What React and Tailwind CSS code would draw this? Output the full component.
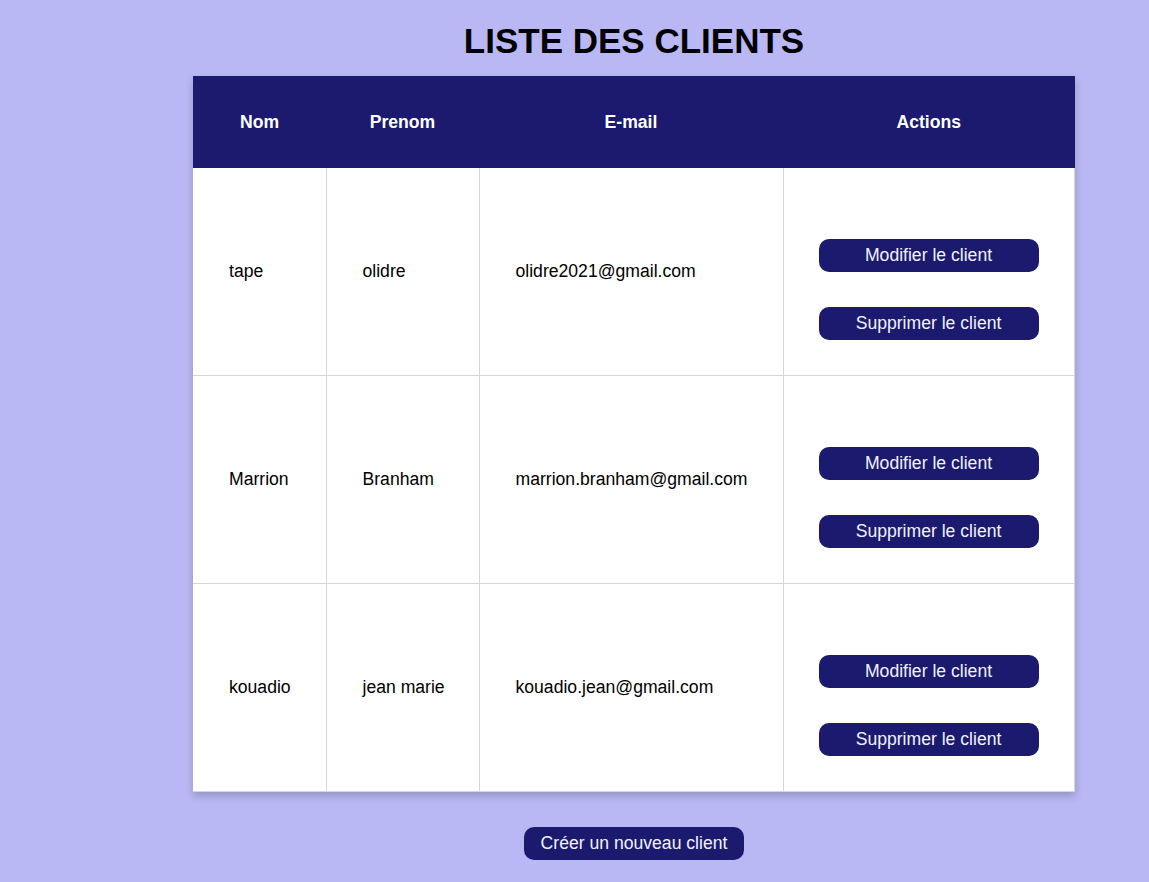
import React from 'react';

const clients = [
    { nom: 'tape', prenom: 'olidre', email: 'olidre2021@gmail.com' },
    { nom: 'Marrion', prenom: 'Branham', email: 'marrion.branham@gmail.com' },
    { nom: 'kouadio', prenom: 'jean marie', email: 'kouadio.jean@gmail.com' },
];

function ActionButton({ children, className = '' }) {
    return (
        <button className={`block w-[220px] h-[33px] rounded-[10px] bg-[#1b1a6e] text-[17.6px] text-[#f2f2ff] leading-none ${className}`}>
            {children}
        </button>
    );
}

export default function App() {
    return (
        <div className="min-h-[882px] bg-[#b9b8f4] font-['Liberation_Sans',Arial,sans-serif] text-black">
            <div className="ml-[119px] flex flex-col items-center">
                <h1 className="mt-[19px] mb-[13px] text-[35px] leading-[44px] font-bold">LISTE DES CLIENTS</h1>

                <table className="w-[882px] border-collapse bg-white shadow-[0_4px_8px_rgba(0,0,0,0.2)] text-[17.6px]">
                    <thead>
                        <tr className="h-[92px] bg-[#1b1a6e] text-white">
                            <th className="w-[133px] font-bold">Nom</th>
                            <th className="w-[153px] font-bold">Prenom</th>
                            <th className="w-[304px] font-bold">E-mail</th>
                            <th className="font-bold">Actions</th>
                        </tr>
                    </thead>
                    <tbody>
                        {clients.map((c) => (
                            <tr key={c.email} className="h-[207px]">
                                <td className="border-r border-b border-[#d6d6d6] pl-[36px]">{c.nom}</td>
                                <td className="border-r border-b border-[#d6d6d6] pl-[36px]">{c.prenom}</td>
                                <td className="border-r border-b border-[#d6d6d6] pl-[36px]">{c.email}</td>
                                <td className="border-r border-b border-[#d6d6d6] px-[35px] pt-[36px] pb-[35px]">
                                    <ActionButton className="mt-[35px]">Modifier le client</ActionButton>
                                    <ActionButton className="mt-[35px]">Supprimer le client</ActionButton>
                                </td>
                            </tr>
                        ))}
                    </tbody>
                </table>

                <ActionButton className="mt-[35px]">Créer un nouveau client</ActionButton>
            </div>
        </div>
    );
}
